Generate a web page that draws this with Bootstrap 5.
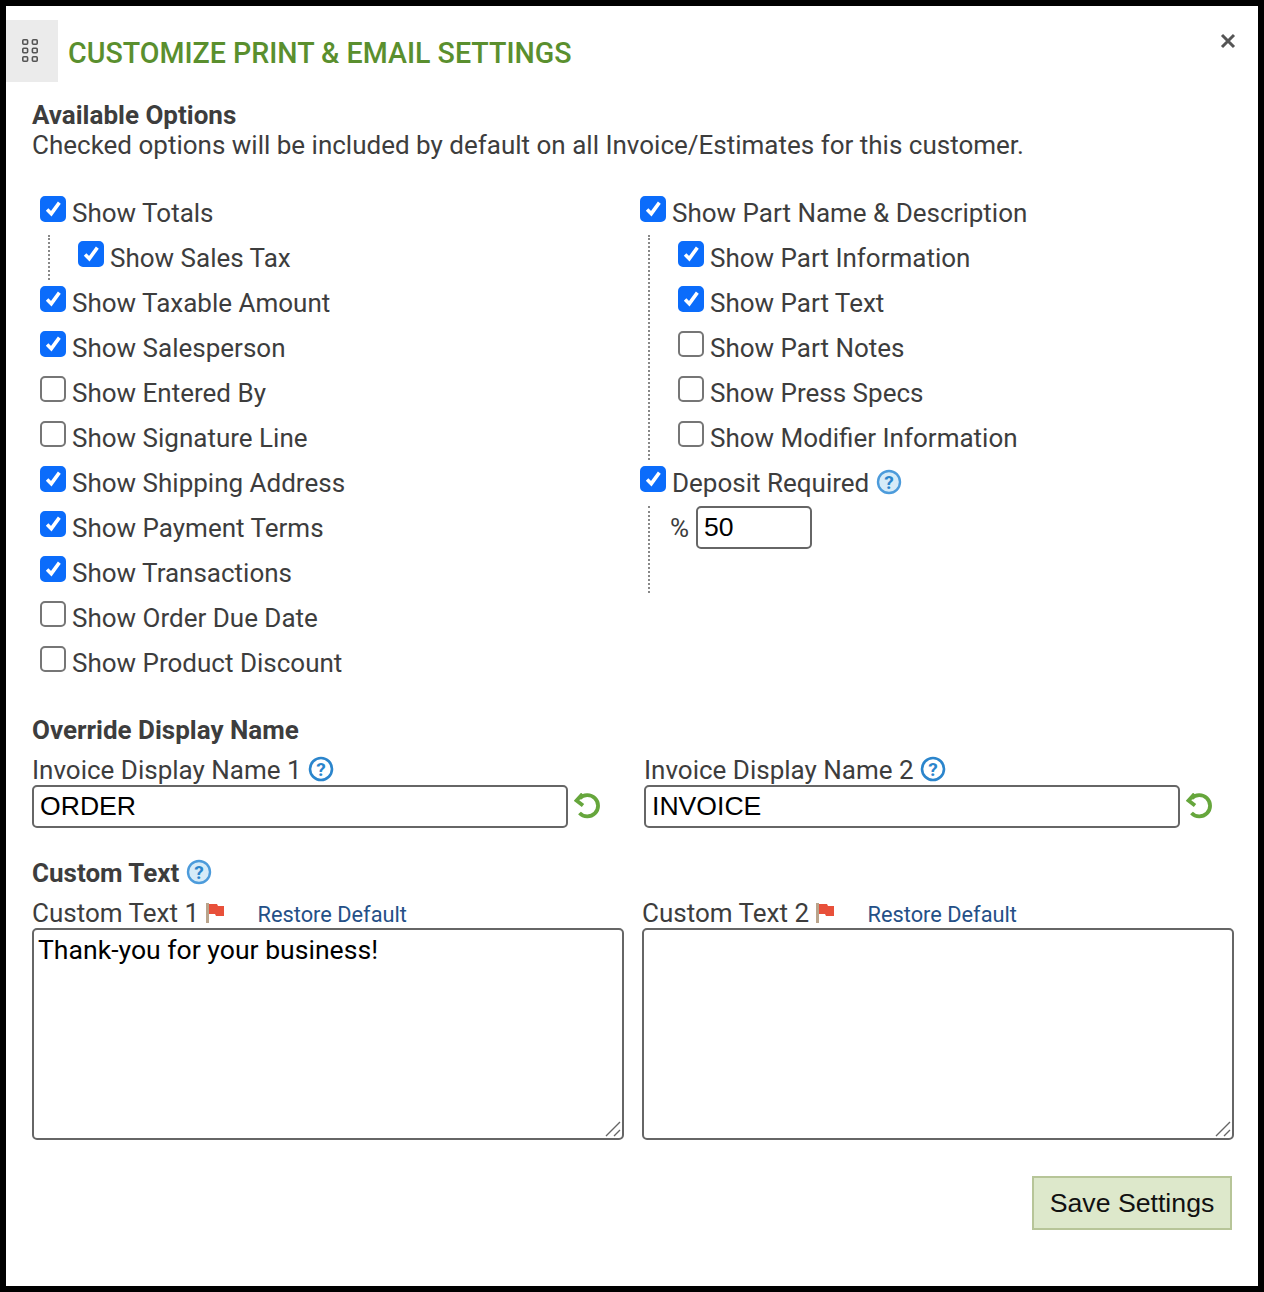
<!DOCTYPE html>
<html lang="en">
<head>
  <meta charset="UTF-8" />
  <meta name="viewport" content="width=device-width, initial-scale=1" />
  <title>Customize Print &amp; Email Settings</title>
  <link href="https://cdn.jsdelivr.net/npm/bootstrap@5.3.3/dist/css/bootstrap.min.css" rel="stylesheet">
  <style>
    html, body { height: 100%; }
    body {
      background: #000;
      padding: 6px;
      font-family: Roboto, sans-serif;
      font-size: 26px;
      line-height: 30px;
      color: #3d3d3d;
    }
    #panel { background: #fff; height: 1280px; position: relative; padding-top: 14px; }
    #grip { width: 52px; height: 62px; background: #ebebeb; padding: 0 4px 2px 0; }
    #title { font-size: 28.6px; font-weight: 500; color: #5a8f2e; margin: 2px 0 0 10px; line-height: 62px; }
    #closer { position: absolute; top: 27px; right: 22px; width: 16px; height: 16px; }
    #body-wrap { padding: 16px 26px 0; }
    .sect-title { font-weight: 700; font-size: 26px; margin: 0; }
    .opt-cols { padding: 36px 0 0 8px; }
    .opt-col { width: 600px; flex: none; }
    .opt-row { height: 45px; display: flex; align-items: flex-start; }
    .opt-row .form-check-input {
      width: 26px; height: 26px; margin: 0 6px 0 0; flex: none;
      border: 2px solid #767676; border-radius: 5px;
    }
    .opt-row .form-check-input:checked {
      background-color: #0b6cfb; border-color: #0b6cfb; background-size: 100%;
      background-image: url("data:image/svg+xml,%3csvg xmlns='http://www.w3.org/2000/svg' viewBox='0 0 26 26'%3e%3cpath fill='none' stroke='%23fff' stroke-width='4.2' d='M6 13.5l5 5L20.500 5.500'/%3e%3c/svg%3e");
    }
    .opt-row label { margin: 2px 0 0; }
    .sub-opts {
      margin: -6px 0 6px 8px; border-left: 2px dotted #888; padding: 6px 0 0 28px;
    }
    .sub-1 { height: 45px; }
    .sub-5 { height: 225px; }
    .sub-pct { height: 87px; margin-top: -5px; margin-bottom: 0; padding: 0 0 0 20px; }
    .pct-input { width: 116px; height: 43px; margin-left: 7px; }
    .txt-box {
      border: 2px solid #666; border-radius: 5px; color: #000; background: #fff;
      padding: 2px 6px; font-size: 26.6px; box-shadow: none;
    }
    input.txt-box { font-family: "Liberation Sans", sans-serif; height: 43px; line-height: 36px; }
    textarea.txt-box {
      font-family: Roboto, sans-serif; width: 592px; height: 212px; line-height: 36px;
      display: block; padding: 2px 4px 0; resize: none;
    }
    .area-wrap { position: relative; width: 592px; }
    .grab { position: absolute; right: 2px; bottom: 2px; }
    .name-col { width: 612px; flex: none; }
    .text-col { flex: none; }
    .text-col-a { width: 610px; }
    .text-col-b { width: 592px; }
    .name-label { height: 30px; }
    .name-box { width: 536px; }
    .undo { margin-left: 6px; flex: none; }
    .help { vertical-align: -3px; }
    .restore { font-size: 21.8px; color: #245087; text-decoration: none; margin-left: 33px; }
    .flag { vertical-align: -1px; margin-left: 1px; }
    .text-label { height: 30px; }
    #save-btn {
      background: #dde8cb; border: 2px solid #b7c598; border-radius: 0; color: #111;
      font-family: "Liberation Sans", sans-serif; font-size: 26.7px; line-height: 30px;
      width: 200px; height: 54px; padding: 0;
    }
  </style>
</head>
<body>
<div id="panel">
  <div class="d-flex align-items-start">
    <div id="grip" class="d-flex align-items-center justify-content-center">
      <svg width="16" height="23" viewBox="0 0 16 23" fill="none" stroke="#555" stroke-width="1.600">
        <rect x=".8" y=".8" width="4.800" height="4.400" rx="1"/><rect x="10.400" y=".8" width="4.800" height="4.400" rx="1"/>
        <rect x=".8" y="9.300" width="4.800" height="4.400" rx="1"/><rect x="10.400" y="9.300" width="4.800" height="4.400" rx="1"/>
        <rect x=".8" y="17.800" width="4.800" height="4.400" rx="1"/><rect x="10.400" y="17.800" width="4.800" height="4.400" rx="1"/>
      </svg>
    </div>
    <h1 id="title">CUSTOMIZE PRINT &amp; EMAIL SETTINGS</h1>
  </div>
  <svg id="closer" viewBox="0 0 16 16" stroke="#555" stroke-width="3"><path d="M2 2l12 12M14 2L2 14"/></svg>

  <div id="body-wrap">
    <p class="sect-title">Available Options</p>
    <p class="m-0">Checked options will be included by default on all Invoice/Estimates for this customer.</p>

    <div class="opt-cols d-flex">
      <div class="opt-col" id="left-col"></div>
      <div class="opt-col" id="right-col"></div>
    </div>

    <p class="sect-title" style="margin-top:24px">Override Display Name</p>
    <div class="d-flex" style="margin-top:10px">
      <div class="name-col">
        <div class="name-label">Invoice Display Name 1 <svg class="help" width="26" height="26" viewBox="0 0 26 26"><circle cx="13" cy="13" r="11" fill="none" stroke="#2b85cc" stroke-width="2.600"/><text x="13" y="19.500" text-anchor="middle" font-size="19" font-weight="700" font-family="Roboto" fill="#2b85cc">?</text></svg></div>
        <div class="d-flex align-items-center">
          <input class="txt-box name-box" value="ORDER">
          <svg class="undo" width="27" height="28" viewBox="0 0 27 28" fill="none" stroke="#66a63c" stroke-width="3.800"><path d="M5.500 5.500A10.700 10.700 0 1 1 5.500 20"/><path d="M8.500 1L2.500 7.500 9 12.500"/></svg>
        </div>
      </div>
      <div class="name-col">
        <div class="name-label">Invoice Display Name 2 <svg class="help" width="26" height="26" viewBox="0 0 26 26"><circle cx="13" cy="13" r="11" fill="none" stroke="#2b85cc" stroke-width="2.600"/><text x="13" y="19.500" text-anchor="middle" font-size="19" font-weight="700" font-family="Roboto" fill="#2b85cc">?</text></svg></div>
        <div class="d-flex align-items-center">
          <input class="txt-box name-box" value="INVOICE">
          <svg class="undo" width="27" height="28" viewBox="0 0 27 28" fill="none" stroke="#66a63c" stroke-width="3.800"><path d="M5.500 5.500A10.700 10.700 0 1 1 5.500 20"/><path d="M8.500 1L2.500 7.500 9 12.500"/></svg>
        </div>
      </div>
    </div>

    <p class="sect-title" style="margin-top:30px">Custom Text <svg class="help" width="26" height="26" viewBox="0 0 26 26"><circle cx="13" cy="13" r="11" fill="#d6ebf8" stroke="#4c9bdb" stroke-width="2.400"/><text x="13" y="19.500" text-anchor="middle" font-size="19" font-weight="700" font-family="Roboto" fill="#2b85cc">?</text></svg></p>
    <div class="d-flex" style="margin-top:10px">
      <div class="text-col text-col-a">
        <div class="text-label">Custom Text 1 <svg class="flag" width="18" height="20" viewBox="0 0 18 20"><rect x="0" y="0" width="3" height="20" fill="#b9a48c"/><path d="M3 1h8l1 2h6v10H10l-1-2H3z" fill="#e8503a"/></svg><a href="#" class="restore">Restore Default</a></div>
        <div class="area-wrap">
          <textarea class="txt-box">Thank-you for your business!</textarea>
          <svg class="grab" width="18" height="18" viewBox="0 0 18 18" stroke="#666" stroke-width="1.400"><path d="M2 16L16 2M10 16l6-6"/></svg>
        </div>
      </div>
      <div class="text-col text-col-b">
        <div class="text-label">Custom Text 2 <svg class="flag" width="18" height="20" viewBox="0 0 18 20"><rect x="0" y="0" width="3" height="20" fill="#b9a48c"/><path d="M3 1h8l1 2h6v10H10l-1-2H3z" fill="#e8503a"/></svg><a href="#" class="restore">Restore Default</a></div>
        <div class="area-wrap">
          <textarea class="txt-box"></textarea>
          <svg class="grab" width="18" height="18" viewBox="0 0 18 18" stroke="#666" stroke-width="1.400"><path d="M2 16L16 2M10 16l6-6"/></svg>
        </div>
      </div>
    </div>

    <div class="d-flex justify-content-end" style="margin-top:36px">
      <button id="save-btn" class="btn" type="button">Save Settings</button>
    </div>
  </div>
</div>

<script src="https://cdn.jsdelivr.net/npm/bootstrap@5.3.3/dist/js/bootstrap.bundle.min.js"></script>
<script>
  let optCount = 0;
  function optRow(text, on, extra) {
    const id = 'opt' + (++optCount);
    return '<div class="opt-row"><input class="form-check-input" type="checkbox" id="' + id + '"' + (on ? ' checked' : '') + '>' +
      '<label for="' + id + '">' + text + (extra || '') + '</label></div>';
  }
  const softHelp = ' <svg class="help" width="26" height="26" viewBox="0 0 26 26"><circle cx="13" cy="13" r="11" fill="#d6ebf8" stroke="#4c9bdb" stroke-width="2.400"/><text x="13" y="19.500" text-anchor="middle" font-size="19" font-weight="700" font-family="Roboto" fill="#2b85cc">?</text></svg>';

  document.getElementById('left-col').innerHTML =
    optRow('Show Totals', true) +
    '<div class="sub-opts sub-1">' + optRow('Show Sales Tax', true) + '</div>' +
    [['Show Taxable Amount', 1], ['Show Salesperson', 1], ['Show Entered By', 0], ['Show Signature Line', 0],
     ['Show Shipping Address', 1], ['Show Payment Terms', 1], ['Show Transactions', 1],
     ['Show Order Due Date', 0], ['Show Product Discount', 0]].map(o => optRow(o[0], o[1])).join('');

  document.getElementById('right-col').innerHTML =
    optRow('Show Part Name &amp; Description', true) +
    '<div class="sub-opts sub-5">' +
    [['Show Part Information', 1], ['Show Part Text', 1], ['Show Part Notes', 0], ['Show Press Specs', 0],
     ['Show Modifier Information', 0]].map(o => optRow(o[0], o[1])).join('') + '</div>' +
    optRow('Deposit Required', true, softHelp) +
    '<div class="sub-opts sub-pct"><div class="d-flex align-items-center"><span>%</span>' +
    '<input class="txt-box pct-input" value="50"></div></div>';
</script>
</body>
</html>
